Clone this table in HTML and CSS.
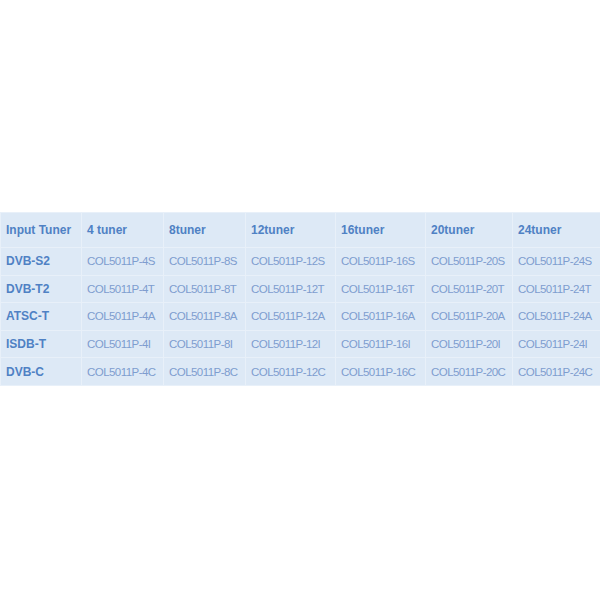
FILE: index.html
```html
<!DOCTYPE html>
<html>
<head>
<meta charset="utf-8">
<link rel="stylesheet" href="styles.css">
</head>
<body>
<table class="spec">
<colgroup>
<col class="c1"><col class="c2"><col class="c3"><col class="c4"><col class="c5"><col class="c6"><col class="c7">
</colgroup>
<thead>
<tr><th>Input Tuner</th><th>4 tuner</th><th>8tuner</th><th>12tuner</th><th>16tuner</th><th>20tuner</th><th>24tuner</th></tr>
</thead>
<tbody>
<tr><th>DVB-S2</th><td>COL5011P-4S</td><td>COL5011P-8S</td><td>COL5011P-12S</td><td>COL5011P-16S</td><td>COL5011P-20S</td><td>COL5011P-24S</td></tr>
<tr><th>DVB-T2</th><td>COL5011P-4T</td><td>COL5011P-8T</td><td>COL5011P-12T</td><td>COL5011P-16T</td><td>COL5011P-20T</td><td>COL5011P-24T</td></tr>
<tr><th>ATSC-T</th><td>COL5011P-4A</td><td>COL5011P-8A</td><td>COL5011P-12A</td><td>COL5011P-16A</td><td>COL5011P-20A</td><td>COL5011P-24A</td></tr>
<tr><th>ISDB-T</th><td>COL5011P-4I</td><td>COL5011P-8I</td><td>COL5011P-12I</td><td>COL5011P-16I</td><td>COL5011P-20I</td><td>COL5011P-24I</td></tr>
<tr><th>DVB-C</th><td>COL5011P-4C</td><td>COL5011P-8C</td><td>COL5011P-12C</td><td>COL5011P-16C</td><td>COL5011P-20C</td><td>COL5011P-24C</td></tr>
</tbody>
</table>
</body>
</html>
```
FILE: styles.css
```css
html, body {
  margin: 0;
  padding: 0;
  background: #ffffff;
}
body {
  padding-top: 212px;
  font-family: "Liberation Sans", Arial, sans-serif;
}
.spec {
  width: 600px;
  table-layout: fixed;
  border-collapse: collapse;
  background: #dde9f6;
  font-size: 12px;
}
.c1 { width: 81px; }
.c2 { width: 82px; }
.c3 { width: 82px; }
.c4 { width: 90px; }
.c5 { width: 90px; }
.c6 { width: 87px; }
.c7 { width: 88px; }
.spec th, .spec td {
  border: 1px solid #e8f0f9;
  text-align: left;
  padding: 0 0 0 5px;
  white-space: nowrap;
  overflow: hidden;
}
.spec thead th {
  height: 34px;
  font-weight: bold;
  color: #4f81c4;
}
.spec tbody th {
  font-weight: bold;
  color: #4f81c4;
  height: 26.6px;
}
.spec tbody td {
  color: #7e9dcf;
  height: 26.6px;
  font-size: 11.5px;
  letter-spacing: -0.55px;
}
```
